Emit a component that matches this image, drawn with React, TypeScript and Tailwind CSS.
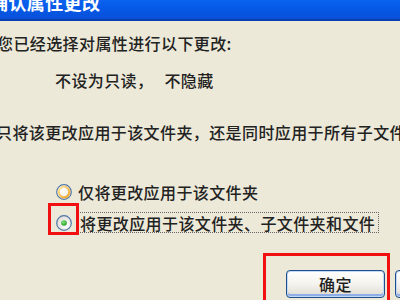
const cjk = "font-['Noto_Sans_CJK_SC','Noto_Sans',sans-serif]";

function RadioHover() {
  return (
    <svg width="16" height="16" viewBox="0 0 16 16" className="shrink-0">
      <defs>
        <linearGradient id="rh" x1="0" y1="0" x2="1" y2="1">
          <stop offset="0" stopColor="#FFE9A8" />
          <stop offset="1" stopColor="#F0A022" />
        </linearGradient>
        <radialGradient id="rhc" cx="0.4" cy="0.4" r="0.7">
          <stop offset="0" stopColor="#FFFFFF" />
          <stop offset="1" stopColor="#E8E6DC" />
        </radialGradient>
      </defs>
      <circle cx="8" cy="8" r="7.3" fill="url(#rhc)" stroke="#4E77A8" strokeWidth="1.2" />
      <circle cx="8" cy="8" r="5.3" fill="none" stroke="url(#rh)" strokeWidth="2.2" />
    </svg>
  );
}

function RadioChecked() {
  return (
    <svg width="16" height="16" viewBox="0 0 16 16" className="shrink-0">
      <defs>
        <radialGradient id="rcc" cx="0.65" cy="0.65" r="0.75">
          <stop offset="0" stopColor="#FFFFFF" />
          <stop offset="1" stopColor="#DCDAD0" />
        </radialGradient>
        <radialGradient id="rdot" cx="0.4" cy="0.35" r="0.7">
          <stop offset="0" stopColor="#7EE27E" />
          <stop offset="1" stopColor="#1C9A1C" />
        </radialGradient>
      </defs>
      <circle cx="8" cy="8" r="7.3" fill="url(#rcc)" stroke="#4E77A8" strokeWidth="1.2" />
      <circle cx="8" cy="8" r="2.8" fill="url(#rdot)" />
    </svg>
  );
}

function XpButton({ label }: { label: string }) {
  return (
    <div className="w-[99px] h-[28px] shrink-0 rounded-[4px] border border-[#1F4E8C] bg-gradient-to-b from-white via-[#F4F3EE] to-[#DEDAD0] shadow-[inset_0_0_0_1px_#C4D8F6,inset_0_-2px_0_1px_#8FAEE6] flex items-center justify-center">
      <span className="text-[16px] leading-[16px] font-medium tracking-[0.5px] text-[#1E1E1E]">{label}</span>
    </div>
  );
}

export default function App() {
  return (
    <div className={`relative w-[400px] h-[300px] overflow-hidden bg-[#ECE9D8] flex flex-col ${cjk}`}>
      {/* Title bar */}
      <div className="h-[21px] shrink-0 overflow-hidden bg-gradient-to-b from-[#0A62EE] via-[#0558E6] to-[#0A50D8] border-b-2 border-[#0A3DAE]">
        <div className="-mt-[7px] -ml-[10px] text-[18px] leading-[18px] font-bold tracking-[0.4px] text-white whitespace-nowrap">
          确认属性更改
        </div>
      </div>

      {/* Body */}
      <div className="text-[16px] leading-[16px] font-medium tracking-[0.4px] text-[#222] whitespace-nowrap">
        <div className="mt-[14px] -ml-[3px]">您已经选择对属性进行以下更改:</div>
        <div className="mt-[21px] ml-[55px] flex">
          <span>不设为只读，</span>
          <span className="w-[11px]" />
          <span>不隐藏</span>
        </div>
        <div className="mt-[36px] -ml-[4px]">只将该更改应用于该文件夹，还是同时应用于所有子文件夹和文件？</div>

        <div className="mt-[43px] ml-[56px] h-[17px] flex items-center gap-[6px]">
          <RadioHover />
          <span>仅将更改应用于该文件夹</span>
        </div>
        <div className="mt-[12px] ml-[56px] h-[21px] flex items-center gap-[6px]">
          <RadioChecked />
          <span className="h-[21px] flex items-center pl-[1px] pr-[3px] border border-dotted border-[#666]">
            将更改应用于该文件夹、子文件夹和文件
          </span>
        </div>

        <div className="mt-[37px] ml-[286px] flex gap-[10px]">
          <XpButton label="确定" />
          <XpButton label="取消" />
        </div>
      </div>

      {/* Red annotation boxes */}
      <div className="absolute left-[48px] top-[203px] w-[31px] h-[32px] border-[3px] border-[#F20F12]" />
      <div className="absolute left-[263px] top-[253px] w-[127px] h-[60px] border-[3px] border-[#F20F12]" />
    </div>
  );
}
